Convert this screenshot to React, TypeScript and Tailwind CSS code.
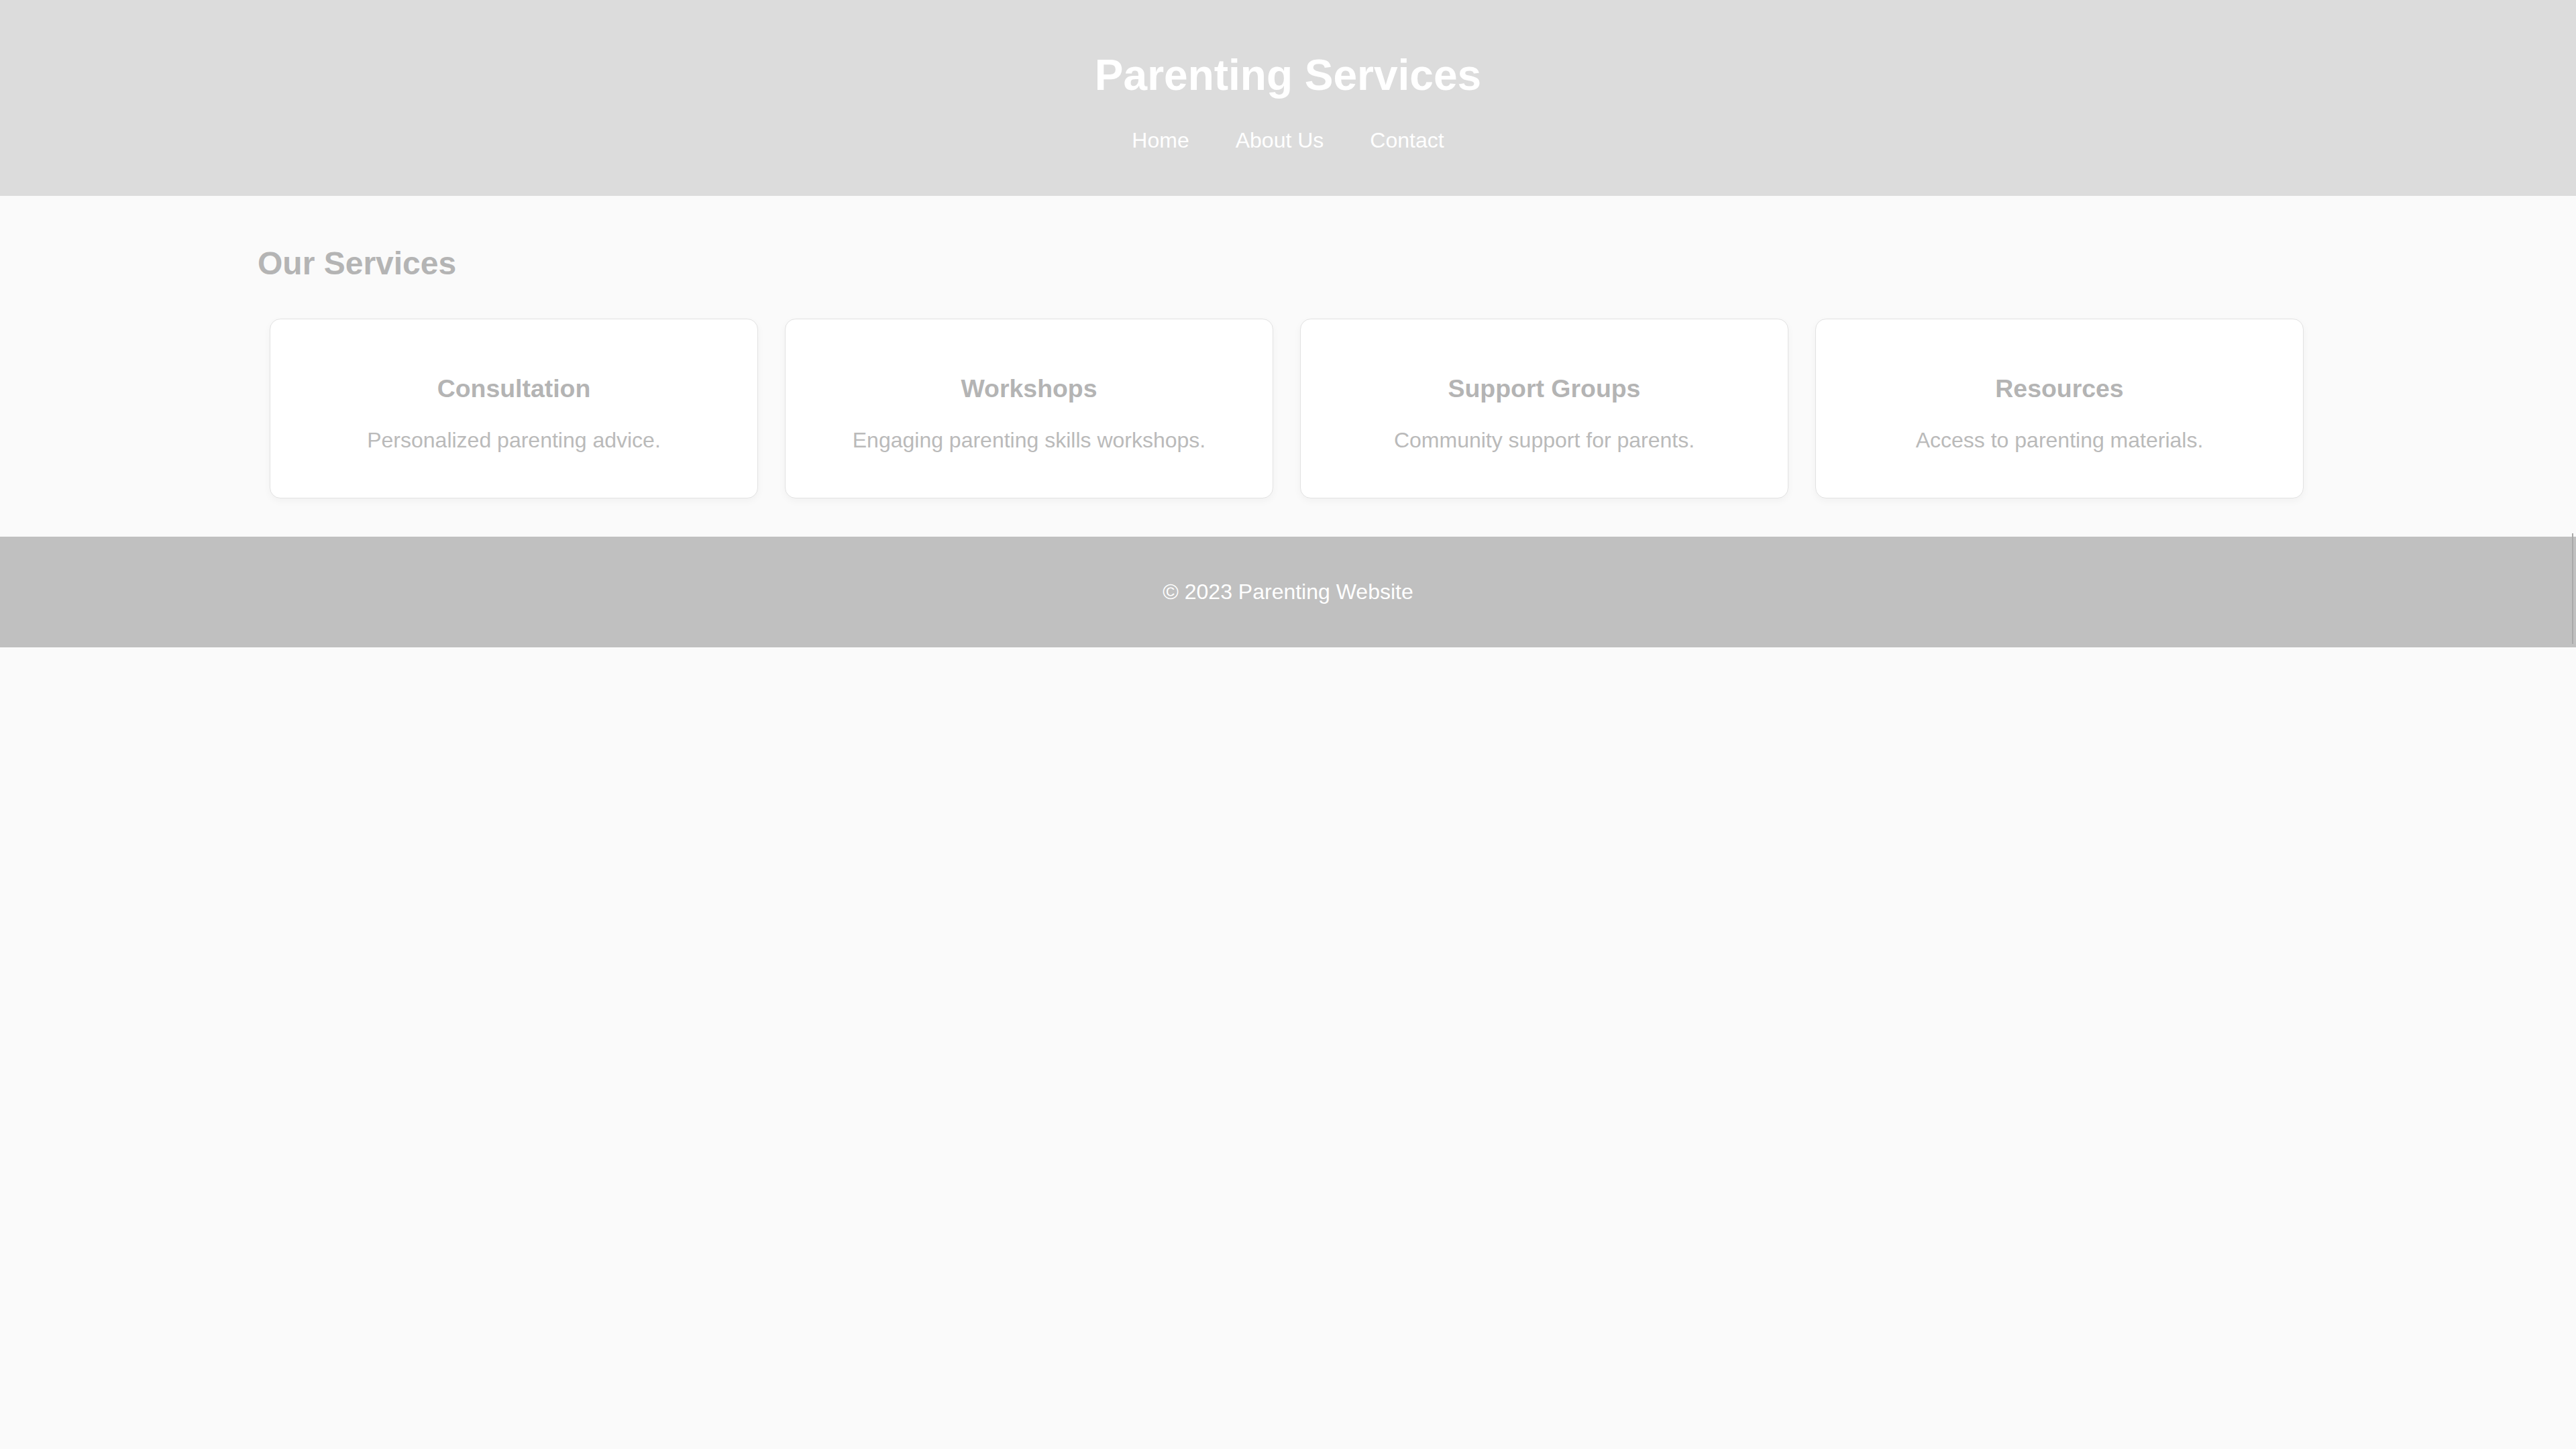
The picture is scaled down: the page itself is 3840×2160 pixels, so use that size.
import React from 'react';

const services = [
  { title: 'Consultation', text: 'Personalized parenting advice.' },
  { title: 'Workshops', text: 'Engaging parenting skills workshops.' },
  { title: 'Support Groups', text: 'Community support for parents.' },
  { title: 'Resources', text: 'Access to parenting materials.' },
];

const navLinks = ['Home', 'About Us', 'Contact'];

const App: React.FC = () => {
  return (
    <div className="min-h-screen bg-[#fafafa] font-['Liberation_Sans',Arial,sans-serif] leading-[1.149]">
      <header className="bg-[#dcdcdc] pt-[76px] pb-[65px] text-center text-white">
        <h1 className="text-[64px] font-bold leading-[1.149]">Parenting Services</h1>
        <nav className="mt-[41px] flex justify-center gap-[69px] text-[32px]">
          {navLinks.map(link => (
            <a key={link} href="#" className="text-white">
              {link}
            </a>
          ))}
        </nav>
      </header>

      <main className="mx-auto w-[3072px] pt-[73px] pb-[57px]">
        <h2 className="mb-[55px] text-[48px] font-bold text-[#b4b4b4]">Our Services</h2>
        <div className="grid grid-cols-4 gap-[40px] pl-[18px] pr-[22px]">
          {services.map(s => (
            <div
              key={s.title}
              className="rounded-[16px] border border-[#e2e2e2] bg-white px-[40px] pt-[45px] pb-[35px] text-center shadow-[0_4px_12px_rgba(0,0,0,0.04)]"
            >
              <h3 className="mt-[37px] text-[37.44px] font-bold text-[#b4b4b4]">{s.title}</h3>
              <p className="mt-[37px] mb-[32px] text-[32px] text-[#bababa]">{s.text}</p>
            </div>
          ))}
        </div>
      </main>

      <footer className="relative bg-[#c0c0c0] py-[64px] text-center text-[32px] text-white">
        <p>© 2023 Parenting Website</p>
        <div className="absolute right-[4px] top-[-5px] bottom-[5px] w-[2px] bg-[#a9a9a9]" />
      </footer>
    </div>
  );
};

export default App;
